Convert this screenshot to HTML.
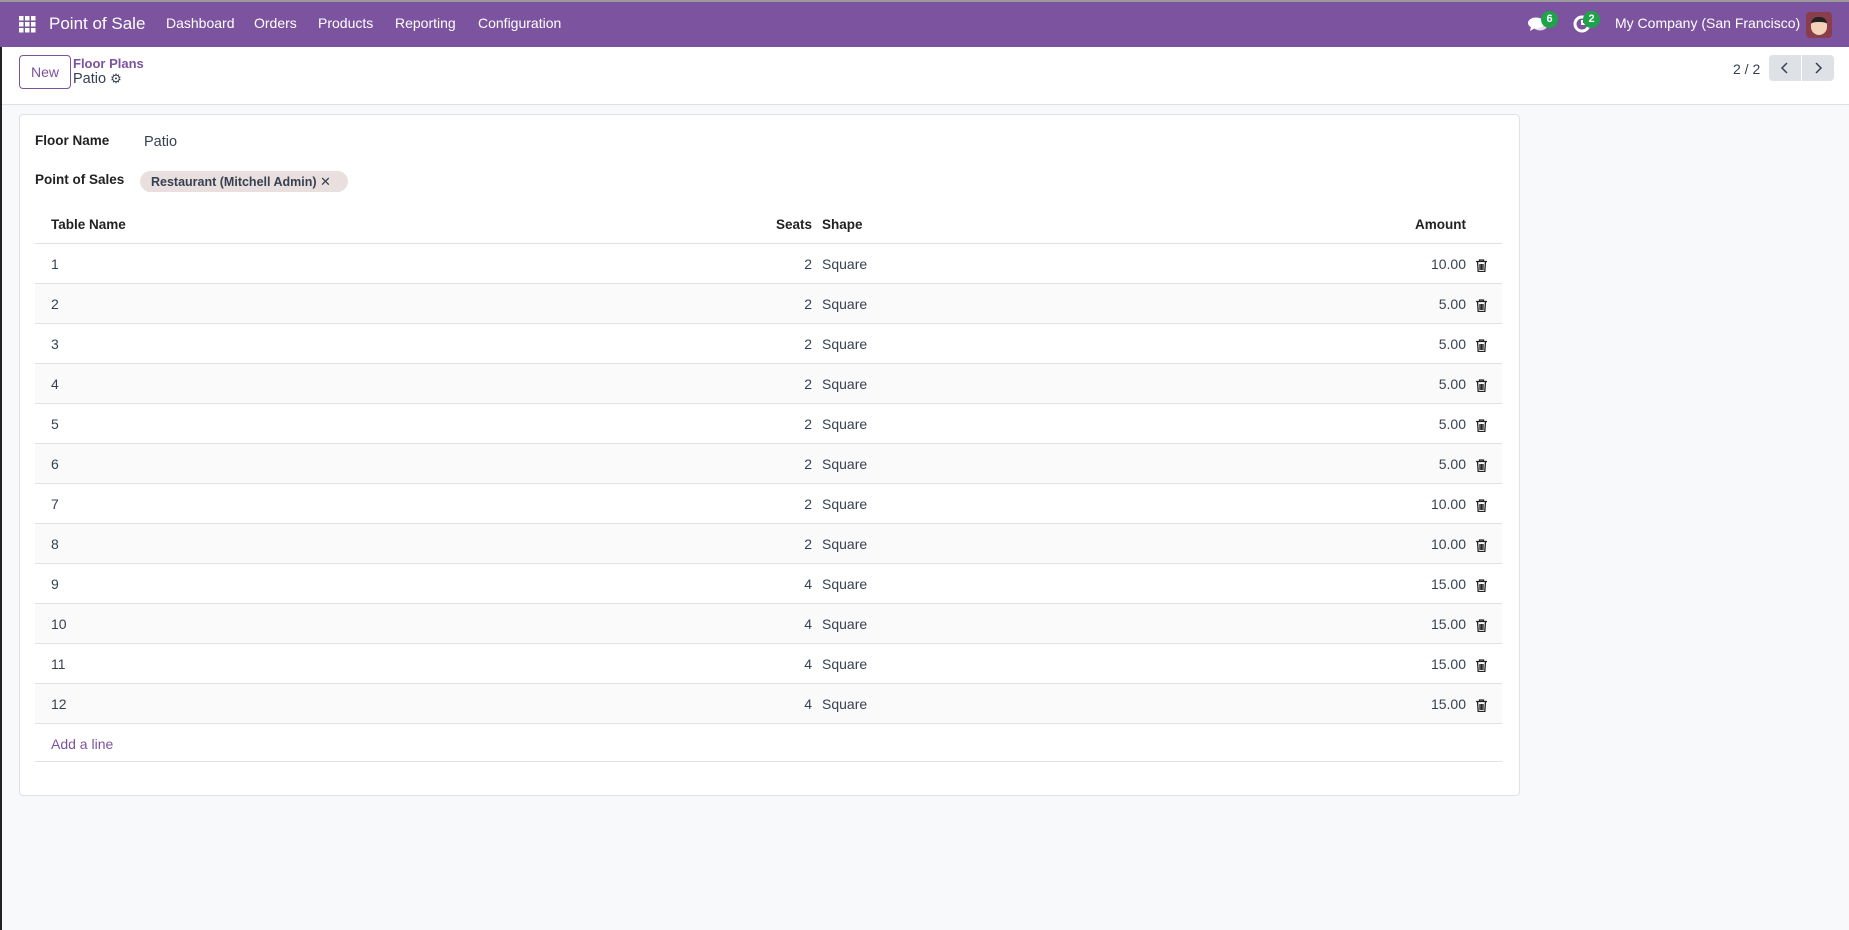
<!DOCTYPE html>
<html><head><meta charset="utf-8"><style>
*{box-sizing:border-box;margin:0;padding:0}
body{width:1849px;height:930px;background:#f8f9fa;font-family:"Liberation Sans",sans-serif;font-size:14px;color:#374151;position:relative;overflow:hidden}
.nav{position:absolute;left:0;top:0;width:1849px;height:47px;background:#7c539e;border-top:2px solid #9a9a9a;color:#fff}
.nav span{position:absolute;top:13px;font-size:14px}
.leftbar{position:absolute;left:0;top:47px;width:2px;height:883px;background:#222}
.cp{position:absolute;left:2px;top:47px;width:1847px;height:58px;background:#fff;border-bottom:1px solid #dee2e6}
.abs{position:absolute}
.card{position:absolute;left:19px;top:114px;width:1501px;height:682px;background:#fff;border:1px solid #dee2e6;border-radius:4px}
.row{position:absolute;left:35px;width:1467px;height:40px;border-bottom:1px solid #dee2e6}
.row span{position:absolute;top:12px}
.badge{position:absolute;background:#1ea34a;color:#fff;font-size:11px;border-radius:9px;width:17px;height:17px;text-align:center;line-height:17px;font-weight:bold}
</style></head><body>
<div class="nav">
 <svg class="abs" style="left:19px;top:14px" width="17" height="17" viewBox="0 0 17 17" fill="#fff"><rect x="0" y="0" width="4.5" height="4.5"/><rect x="6" y="0" width="4.5" height="4.5"/><rect x="12" y="0" width="4.5" height="4.5"/><rect x="0" y="6" width="4.5" height="4.5"/><rect x="6" y="6" width="4.5" height="4.5"/><rect x="12" y="6" width="4.5" height="4.5"/><rect x="0" y="12" width="4.5" height="4.5"/><rect x="6" y="12" width="4.5" height="4.5"/><rect x="12" y="12" width="4.5" height="4.5"/></svg>
 <span style="left:49px;top:12px;font-size:17px">Point of Sale</span>
 <span style="left:166px">Dashboard</span>
 <span style="left:254px">Orders</span>
 <span style="left:318px">Products</span>
 <span style="left:395px">Reporting</span>
 <span style="left:478px">Configuration</span>
 <svg class="abs" style="left:1528px;top:15px" width="20" height="16" viewBox="0 0 20 16" fill="#fff"><ellipse cx="8" cy="6" rx="8" ry="5.5"/><path d="M3 10 L2 14 L7 11Z"/><ellipse cx="12" cy="9" rx="7" ry="4.5" opacity=".8"/></svg>
 <div class="badge" style="left:1541px;top:9px">6</div>
 <svg class="abs" style="left:1573px;top:13px" width="18" height="18" viewBox="0 0 18 18"><circle cx="9" cy="9" r="7" fill="none" stroke="#fff" stroke-width="3"/><path d="M9 5v4h3" stroke="#fff" stroke-width="2" fill="none"/></svg>
 <div class="badge" style="left:1583px;top:9px">2</div>
 <span style="left:1615px;font-size:14px">My Company (San Francisco)</span>
 <div class="abs" style="left:1806px;top:10px;width:26px;height:26px;background:#8a3d4a;border-radius:4px"><div style="margin:5px 0 0 5px;width:16px;height:18px;background:#f3d3b8;border-radius:7px 7px 8px 8px;border-top:5px solid #222"></div></div>
</div>
<div class="leftbar"></div>
<div class="cp">
 <div class="abs" style="left:17px;top:8px;width:52px;height:34px;border:1px solid #7c539e;border-radius:4px;color:#7c539e;text-align:center;line-height:32px;font-size:14px">New</div>
 <div class="abs" style="left:71px;top:9px;color:#7c539e;font-size:13px;font-weight:bold">Floor Plans</div>
 <div class="abs" style="left:71px;top:24px;font-size:14.5px;color:#374151">Patio <span style="font-size:13px">⚙</span></div>
 <div class="abs" style="left:1731px;top:14px;font-size:14px">2 / 2</div>
 <div class="abs" style="left:1767px;top:8px;width:32px;height:26px;background:#dee2e6;border-radius:4px 0 0 4px"><svg width="32" height="26" viewBox="0 0 32 26"><path d="M18 8l-5 5 5 5" stroke="#374151" stroke-width="1.5" fill="none"/></svg></div>
 <div class="abs" style="left:1800px;top:8px;width:32px;height:26px;background:#dee2e6;border-radius:0 4px 4px 0"><svg width="32" height="26" viewBox="0 0 32 26"><path d="M14 8l5 5-5 5" stroke="#374151" stroke-width="1.5" fill="none"/></svg></div>
</div>
<div class="card"></div>
<div class="abs" style="left:35px;top:133px;font-weight:bold;color:#222;font-size:13.5px">Floor Name</div>
<div class="abs" style="left:144px;top:134px;font-size:14.5px">Patio</div>
<div class="abs" style="left:35px;top:172px;font-weight:bold;color:#222;font-size:13.5px">Point of Sales</div>
<div class="abs" style="left:140px;top:171px;width:208px;height:21px;background:#e9dfdf;border-radius:11px;font-size:12.5px;line-height:21px;padding-left:11px;color:#374151;font-weight:bold">Restaurant (Mitchell Admin) <span style="font-weight:normal;font-size:13px">✕</span></div>
<div class="row" style="top:204px"><span style="left:16px;top:13px;font-weight:bold;color:#222;font-size:13.5px">Table Name</span><span style="right:690px;top:13px;font-weight:bold;color:#222;font-size:13.5px">Seats</span><span style="left:787px;top:13px;font-weight:bold;color:#222;font-size:13.5px">Shape</span><span style="right:36px;top:13px;font-weight:bold;color:#222;font-size:13.5px">Amount</span></div>
<div id="rows"></div>
<div class="row" style="top:724px;height:38px"><span style="left:16px;color:#7c539e">Add a line</span></div>
<script>
var s=[2,2,2,2,2,2,2,2,4,4,4,4],a=["10.00","5.00","5.00","5.00","5.00","5.00","10.00","10.00","15.00","15.00","15.00","15.00"],h="";
for(var i=0;i<12;i++){h+='<div class="row" style="top:'+(244+i*40)+'px;background:'+(i%2?'#fafafa':'#fff')+'"><span style="left:16px">'+(i+1)+'</span><span style="right:690px">'+s[i]+'</span><span style="left:787px">Square</span><span style="right:36px">'+a[i]+'</span><svg style="position:absolute;left:1441px;top:15px" width="11" height="13" viewBox="0 0 11 13"><path d="M0 2.5h11M3.5 2.5V1h4v1.5M1.5 2.5l.7 10h6.6l.7-10M4 5v6M5.5 5v6M7 5v6" stroke="#222" stroke-width="1.3" fill="none"/></svg></div>';}
document.getElementById("rows").innerHTML=h;
</script>
</body></html>
